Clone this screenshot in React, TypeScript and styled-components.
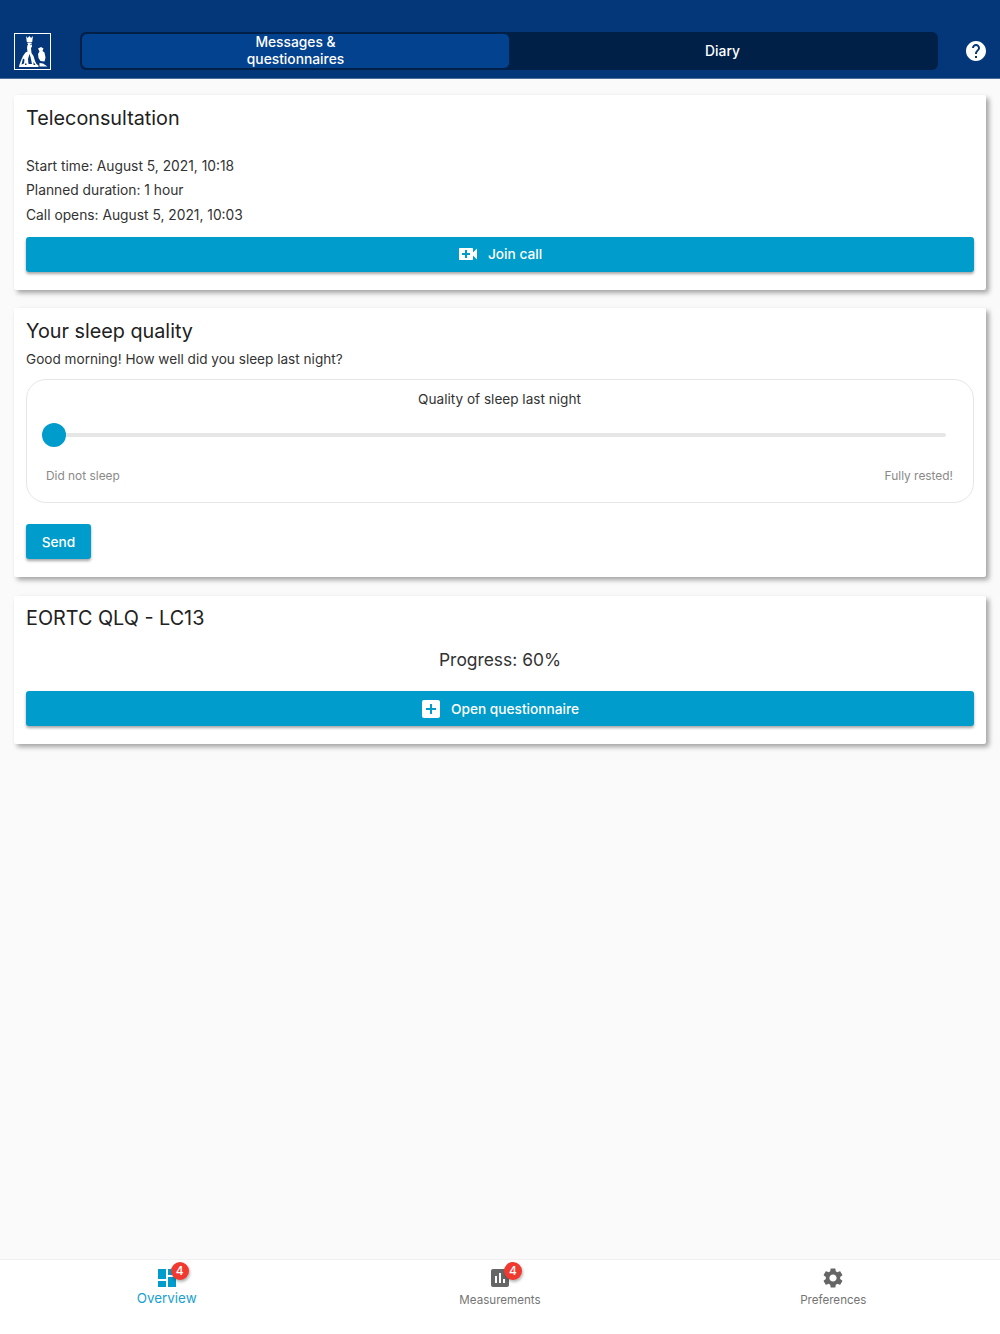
import React from "react";
import styled, { createGlobalStyle } from "styled-components";
import { MdAddBox, MdDashboard, MdHelp, MdPoll, MdSettings, MdVideoCall } from "react-icons/md";

const GlobalStyle = createGlobalStyle`
    html, body {
        margin: 0;
        padding: 0;
        background: #fafafa;
    }
    * {
        box-sizing: border-box;
    }
    body {
        font-family: "Inter", "Roboto", "Liberation Sans", sans-serif;
        color: #212121;
    }
`;

const Page = styled.div`
    display: flex;
    flex-direction: column;
    height: 1334px;
    overflow: hidden;
`;

const Header = styled.header`
    height: 79px;
    flex-shrink: 0;
    display: flex;
    align-items: flex-start;
    padding: 32px 12px 0 14px;
    background: #03377a;
    border-bottom: 1px solid #4d6f9c;
`;

const Logo = styled.svg`
    width: 37px;
    height: 37px;
    flex-shrink: 0;
    margin-top: 1px;
`;

const Tabs = styled.div`
    display: flex;
    width: 858px;
    height: 38px;
    margin-left: 29px;
    padding: 2px;
    border-radius: 6px;
    background: #012048;
`;

const Tab = styled.div<{ $active?: boolean }>`
    flex: 1;
    display: flex;
    align-items: center;
    justify-content: center;
    text-align: center;
    padding: 0 130px;
    border-radius: 5px;
    color: #fff;
    font-size: 13.8px;
    font-weight: 500;
    line-height: 17px;
    background: ${(props) => (props.$active ? "#03428f" : "transparent")};
`;

const HelpButton = styled.div`
    margin-left: auto;
    margin-top: 7px;
    width: 24px;
    height: 24px;
    color: #fff;
    svg {
        display: block;
    }
`;

const Content = styled.main`
    flex: 1;
    display: flex;
    flex-direction: column;
    gap: 18px;
    padding: 16px 14px 0;
`;

const Card = styled.section<{ $height: number; $offset?: number }>`
    height: ${(props) => props.$height}px;
    margin-top: ${(props) => props.$offset ?? 0}px;
    padding: 0 12px;
    border-radius: 2px;
    background: #fff;
    box-shadow: 3px 3px 5px rgba(0, 0, 0, 0.35);
`;

const CardTitle = styled.h2<{ $top: number; $bottom: number }>`
    margin: ${(props) => props.$top}px 0 ${(props) => props.$bottom}px;
    font-size: 19.8px;
    font-weight: 400;
    line-height: 24px;
    color: #212121;
`;

const InfoLine = styled.p`
    margin: 0;
    font-size: 13.8px;
    line-height: 24.3px;
    color: #333;
`;

const WideButton = styled.div<{ $top: number }>`
    display: flex;
    align-items: center;
    justify-content: center;
    gap: 8px;
    height: 35px;
    margin-top: ${(props) => props.$top}px;
    padding-right: 2px;
    border-radius: 3px;
    background: #009ccb;
    color: #fff;
    font-size: 13.7px;
    font-weight: 500;
    box-shadow: 0 2px 3px rgba(0, 0, 0, 0.35);
`;

const SmallButton = styled(WideButton)`
    width: 65px;
    padding-right: 0;
`;

const Question = styled.p`
    margin: 0;
    font-size: 13.6px;
    line-height: 18px;
    color: #333;
`;

const SliderPanel = styled.div`
    height: 124px;
    margin-top: 11px;
    padding: 10px 20px 0 19px;
    border: 1px solid #e6e6e6;
    border-radius: 20px;
`;

const SliderLabel = styled.div`
    text-align: center;
    font-size: 13.6px;
    line-height: 18px;
    color: #333;
`;

const SliderTrack = styled.div`
    position: relative;
    height: 4px;
    margin: 25px 7px 0 0;
    border-radius: 2px;
    background: #e6e6e6;
`;

const SliderThumb = styled.div`
    position: absolute;
    top: -10px;
    left: -4px;
    width: 24px;
    height: 24px;
    border-radius: 50%;
    background: #009ccb;
`;

const SliderEnds = styled.div`
    display: flex;
    justify-content: space-between;
    margin-top: 31px;
    font-size: 11.9px;
    line-height: 16px;
    color: #8a8a8a;
`;

const Progress = styled.div`
    margin-top: 19px;
    text-align: center;
    font-size: 17.4px;
    line-height: 22px;
    color: #333;
`;

const BottomBar = styled.nav`
    height: 75px;
    flex-shrink: 0;
    display: grid;
    grid-template-columns: repeat(3, 1fr);
    background: #fff;
    border-top: 1px solid #f0f0f0;
`;

const NavItem = styled.div<{ $active?: boolean }>`
    display: flex;
    flex-direction: column;
    align-items: center;
    padding-top: 6px;
    color: ${(props) => (props.$active ? "#009ccb" : "#666")};
`;

const NavIcon = styled.div`
    position: relative;
    width: 24px;
    height: 24px;
    svg {
        display: block;
    }
`;

const Badge = styled.span`
    position: absolute;
    top: -4px;
    left: 16px;
    width: 18px;
    height: 18px;
    border-radius: 50%;
    background: #f03a2f;
    color: #fff;
    font-size: 12px;
    font-weight: 500;
    line-height: 18px;
    text-align: center;
    box-shadow: 1px 2px 3px rgba(0, 0, 0, 0.3);
`;

const NavLabel = styled.span<{ $active?: boolean }>`
    margin-top: ${(props) => (props.$active ? "0" : "2px")};
    font-size: ${(props) => (props.$active ? "13.4px" : "11.6px")};
    line-height: 16px;
    color: ${(props) => (props.$active ? "#1a9fd0" : "#757575")};
`;

function LogoMark() {
    return (
        <Logo viewBox="0 0 37 37">
            <rect x="0.5" y="0.5" width="36" height="36" fill="none" stroke="#fff" strokeWidth="1" />
            {/* crown and standing figure */}
            <path
                fill="#fff"
                d="M12 3l1.500 2L15.500 3l1.500 2L19 3l-.8 6h-5.400zM13.500 9.500h4l.5 4-1 1.500.5 5 2 3 1.500 5 1.500 3 2 1.500v1.500H5l.5-2.500 1.500-4 2-4.500 2.500-3.500 2-1-.5-3.500.5-3z"
            />
            {/* small kneeling figure */}
            <path
                fill="#fff"
                d="M24 15.500l3-1.500 2.500 1.500-1 2.500 2 1.500 1 5-1 4-4-.5-2-3-.5-4 1.500-2.500zM25.500 30l3.500.5 4.500 3h-8z"
            />
            {/* gaps in the drawing */}
            <path
                fill="#03377a"
                d="M15.500 21l1 3 1.500 7h-3.500l-.5-5zM9 25.500l1.500 1-.5 4-2.500 1zM19.500 29l2 3h-2zM13 11h1v1h-1zM16.500 11h1v1h-1zM11 30.500h1.500V32H11z"
            />
        </Logo>
    );
}

function App() {
    return (
        <Page>
            <GlobalStyle />
            <Header>
                <LogoMark />
                <Tabs>
                    <Tab $active>Messages &amp; questionnaires</Tab>
                    <Tab>Diary</Tab>
                </Tabs>
                <HelpButton>
                    <MdHelp size={24} />
                </HelpButton>
            </Header>
            <Content>
                <Card $height={195}>
                    <CardTitle $top={11} $bottom={24}>Teleconsultation</CardTitle>
                    <InfoLine>Start time: August 5, 2021, 10:18</InfoLine>
                    <InfoLine>Planned duration: 1 hour</InfoLine>
                    <InfoLine>Call opens: August 5, 2021, 10:03</InfoLine>
                    <WideButton $top={10}>
                        <MdVideoCall size={24} />
                        Join call
                    </WideButton>
                </Card>
                <Card $height={269}>
                    <CardTitle $top={11} $bottom={7}>Your sleep quality</CardTitle>
                    <Question>Good morning! How well did you sleep last night?</Question>
                    <SliderPanel>
                        <SliderLabel>Quality of sleep last night</SliderLabel>
                        <SliderTrack>
                            <SliderThumb />
                        </SliderTrack>
                        <SliderEnds>
                            <span>Did not sleep</span>
                            <span>Fully rested!</span>
                        </SliderEnds>
                    </SliderPanel>
                    <SmallButton $top={21}>Send</SmallButton>
                </Card>
                <Card $height={148} $offset={1}>
                    <CardTitle $top={10} $bottom={0}>EORTC QLQ - LC13</CardTitle>
                    <Progress>Progress: 60%</Progress>
                    <WideButton $top={20}>
                        <MdAddBox size={24} />
                        Open questionnaire
                    </WideButton>
                </Card>
            </Content>
            <BottomBar>
                <NavItem $active>
                    <NavIcon>
                        <MdDashboard size={24} />
                        <Badge>4</Badge>
                    </NavIcon>
                    <NavLabel $active>Overview</NavLabel>
                </NavItem>
                <NavItem>
                    <NavIcon>
                        <MdPoll size={24} />
                        <Badge>4</Badge>
                    </NavIcon>
                    <NavLabel>Measurements</NavLabel>
                </NavItem>
                <NavItem>
                    <NavIcon>
                        <MdSettings size={24} />
                    </NavIcon>
                    <NavLabel>Preferences</NavLabel>
                </NavItem>
            </BottomBar>
        </Page>
    );
}

export default App;
